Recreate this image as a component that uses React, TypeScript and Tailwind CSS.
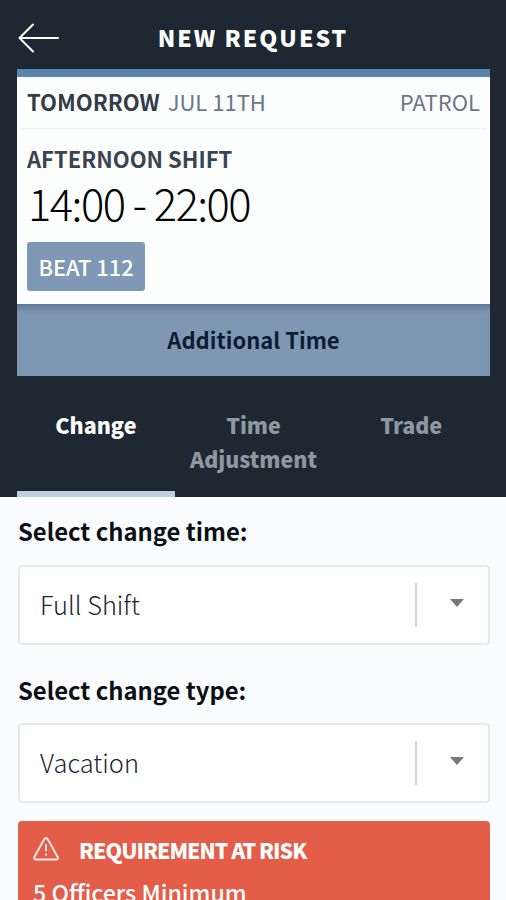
import React, { useState } from 'react';
import { clsx } from 'clsx';

const TABS = ['Change', 'Time Adjustment', 'Trade'];

function SelectField({ label, value }: { label: string; value: string }) {
  return (
    <div className="mb-[18px]">
      <div className="h-[60.5px] pt-[11px] text-[23.8px] leading-8 font-bold text-[#0b0f16]">
        <span className="whitespace-nowrap">{label}</span>
      </div>
      <button className="flex h-20 w-full items-center rounded-sm border-2 border-[#e8e9ea] bg-white text-left">
        <span className="flex-1 pb-0.5 pl-5 text-[25.4px] leading-8 font-light text-[#1c2530]">{value}</span>
        <span className="h-11 w-0.5 bg-[#d2d3d5]" />
        <span className="flex w-[71px] justify-center">
          <svg className="-mt-1 ml-2 h-2 w-[14px]" viewBox="0 0 14 8">
            <path d="M0 0H14L7 8Z" fill="#777" />
          </svg>
        </span>
      </button>
    </div>
  );
}

function ShiftCard() {
  return (
    <div className="mr-4 ml-[17px]">
      <div className="h-[235px] border-t-8 border-[#5a83ae] bg-[#fcfefe]">
        <div className="mx-1 flex h-[52px] items-center justify-between border-b border-dotted border-[#e3e6ea] px-[6px] pb-1 text-[22px] leading-8 text-[#6b7688]">
          <div className="whitespace-nowrap">
            <span className="font-bold text-[#333d47]">TOMORROW</span>
            <span className="ml-2">JUL 11TH</span>
          </div>
          <span>PATROL</span>
        </div>
        <div className="px-[10px] pt-[13px]">
          <div className="text-[22px] leading-8 font-bold text-[#3a4450]">AFTERNOON SHIFT</div>
          <div className="h-[60px] pt-px pl-px text-[43.5px] leading-[56px] font-light tracking-[-1.5px] whitespace-nowrap text-black">
            14:00 - 22:00
          </div>
          <span className="mt-2 flex h-[49px] w-[118px] items-center justify-center rounded-[3px] bg-[#7e98b5] pt-px text-[21.8px] font-medium whitespace-nowrap text-white">
            BEAT 112
          </span>
        </div>
      </div>
      <button className="block h-[72px] w-full bg-[#7e98b3] pb-0.5 text-[22px] font-bold text-[#0c1e33] shadow-[inset_0_8px_7px_-5px_rgba(50,75,105,0.5)]">
        Additional Time
      </button>
    </div>
  );
}

export default function App() {
  const [activeTab, setActiveTab] = useState('Change');

  return (
    <div className="h-[900px] w-full overflow-hidden bg-[#fbfcfe] font-['Noto_Sans_CJK_SC',sans-serif]">
      <div className="h-[497px] bg-[#1d2833]">
        <header className="grid h-[69px] grid-cols-[60px_1fr_60px] items-center pt-1">
          <button className="pt-0.5 pl-[18px]">
            <svg className="h-[30px] w-[42px]" viewBox="0 0 42 30" fill="none" stroke="white" strokeWidth="2" strokeLinecap="round" strokeLinejoin="round">
              <path d="M40 15H1.5M15 1.5L1.5 15L15 28.5" />
            </svg>
          </button>
          <h1 className="text-center text-[23px] leading-8 font-black tracking-[2px] whitespace-nowrap text-white">NEW REQUEST</h1>
        </header>

        <ShiftCard />

        <nav className="mr-4 ml-[17px] grid h-[121px] grid-cols-3">
          {TABS.map((tab) => (
            <button
              key={tab}
              onClick={() => setActiveTab(tab)}
              className={clsx(
                'flex items-start justify-center border-b-[6px] px-2 pt-8 text-[21.5px] leading-[34px] font-black',
                activeTab === tab ? 'border-[#bfcfdf] text-white' : 'border-transparent text-[#8f979f]'
              )}
            >
              {tab}
            </button>
          ))}
        </nav>
      </div>

      <main className="mr-4 ml-[18px] pt-[7px]">
        <SelectField label="Select change time:" value="Full Shift" />
        <SelectField label="Select change type:" value="Vacation" />

        <div className="rounded-sm bg-[#e45d49] px-[15px] pt-3 pb-6 text-white">
          <div className="flex h-8 items-center">
            <svg className="h-6 w-[26px]" viewBox="0 0 26 24" fill="none" stroke="white" strokeOpacity="0.9" strokeWidth="1.8" strokeLinecap="round" strokeLinejoin="round">
              <path d="M11.4 2L1.3 20C.7 21.3 1.4 22.5 2.8 22.5H23.2C24.6 22.5 25.3 21.3 24.7 20L14.6 2C13.9.8 12.1.8 11.4 2Z" />
              <path d="M13 8V13.5M13 17.5V18" />
            </svg>
            <span className="ml-5 pt-0.5 text-[21.3px] leading-8 font-black tracking-[-1px] whitespace-nowrap">REQUIREMENT AT RISK</span>
          </div>
          <div className="mt-[11px] text-[23.2px] leading-8 font-medium">5 Officers Minimum</div>
        </div>
      </main>
    </div>
  );
}
